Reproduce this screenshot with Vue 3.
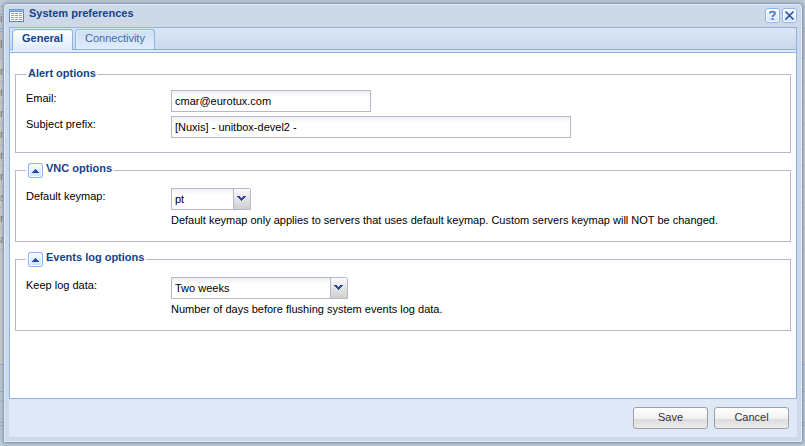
<script setup>
import { ref } from 'vue'

const email = ref('cmar@eurotux.com')
const prefix = ref('[Nuxis] - unitbox-devel2 -')
const keymap = ref('pt')
const logDays = ref('Two weeks')
const tab = ref('General')
const tabs = ['General', 'Connectivity']
const openVnc = ref(true)
const openLog = ref(true)
const rows = ['r', 'm', 'm', 'm', 'm', 'ro', 's', 'm', 'ai']
</script>

<template>
  <div class="page">
    <div class="backdrop" aria-hidden="true">
      <div class="back-top"></div>
      <div class="back-menu">i</div>
      <div class="back-gap"></div>
      <div class="back-head">l</div>
      <div class="back-list">
        <div v-for="(r, i) in rows" :key="i" class="back-row">{{ r }}</div>
      </div>
      <div class="back-foot"></div>
      <div class="back-split"></div>
      <div class="back-menu"></div>
      <div class="back-gap"></div>
      <div class="back-status"></div>
    </div>

    <form class="window" role="dialog" aria-labelledby="title" @submit.prevent>
      <header class="head">
        <svg class="win-icon" width="15" height="13" viewBox="0 0 15 13" shape-rendering="crispEdges" aria-hidden="true">
          <rect x="0" y="0" width="15" height="13" fill="#5b83c4" />
          <rect x="0" y="0" width="15" height="3" fill="#6f9be0" />
          <rect x="1" y="1" width="13" height="1" fill="#8fb4ee" />
          <rect x="1" y="3" width="13" height="9" fill="#fff" />
          <path d="M2 4.5H5M6 4.5H9M10 4.5H13M2 6.5H5M6 6.5H9M10 6.5H13M2 8.5H5M6 8.5H9M10 8.5H13M2 10.5H5M6 10.5H9M10 10.5H13" stroke="#9c9c9c" stroke-width="1" />
        </svg>
        <h1 id="title">System preferences</h1>
        <button type="button" class="tool" aria-label="Help">
          <svg width="15" height="15" viewBox="0 0 15 15" aria-hidden="true">
            <path d="M5 5.6V5Q5 3.6 7.5 3.6T10 5.2Q10 6.4 8.6 7.2Q7.6 7.8 7.6 9" fill="none" stroke="#4a7db5" stroke-width="1.8" />
            <rect x="6.6" y="10" width="2" height="2" fill="#4a7db5" />
          </svg>
        </button>
        <button type="button" class="tool" aria-label="Close">
          <svg width="15" height="15" viewBox="0 0 15 15" aria-hidden="true">
            <path d="M4 4L11 11M11 4L4 11" stroke="#2b4a94" stroke-width="1.5" stroke-linecap="square" />
          </svg>
        </button>
      </header>

      <div class="panel">
        <nav class="tabs" role="tablist">
          <button v-for="t in tabs" :key="t" type="button" role="tab" class="tab"
            :class="{ active: tab === t }" :aria-selected="tab === t" @click="tab = t">{{ t }}</button>
        </nav>
        <div class="spacer"></div>

        <main class="body">
          <fieldset>
            <legend>Alert options</legend>
            <div class="field">
              <label for="email">Email:</label>
              <input id="email" v-model="email" class="text short" type="text">
            </div>
            <div class="field">
              <label for="prefix">Subject prefix:</label>
              <input id="prefix" v-model="prefix" class="text long" type="text">
            </div>
          </fieldset>

          <fieldset class="collapsible">
            <legend>
              <button type="button" class="tool" aria-label="Toggle VNC options" @click="openVnc = !openVnc">
                <svg width="15" height="15" viewBox="0 0 15 15" shape-rendering="crispEdges" aria-hidden="true">
                  <path d="M7 6h1v1h1v1h1v1h1v1H4V9h1V8h1V7h1z" fill="#2b4a94" />
                </svg>
              </button>
              <span>VNC options</span>
            </legend>
            <div v-show="openVnc" class="field">
              <label for="keymap">Default keymap:</label>
              <div class="combo narrow">
                <select id="keymap" v-model="keymap">
                  <option>pt</option>
                  <option>en-us</option>
                </select>
                <span class="trigger"><svg width="16" height="20" viewBox="0 0 16 20" shape-rendering="crispEdges" aria-hidden="true"><path d="M3 7h3v1h1v1h1v-1h1v-1h3v1h-1v1h-1v1h-1v1h-1v1h-1v-1h-1v-1h-1v-1h-1v-1h-1z" fill="#2b4a94" /></svg></span>
              </div>
              <p>Default keymap only applies to servers that uses default keymap. Custom servers keymap will NOT be changed.</p>
            </div>
          </fieldset>

          <fieldset class="collapsible">
            <legend>
              <button type="button" class="tool" aria-label="Toggle events log options" @click="openLog = !openLog">
                <svg width="15" height="15" viewBox="0 0 15 15" shape-rendering="crispEdges" aria-hidden="true">
                  <path d="M7 6h1v1h1v1h1v1h1v1H4V9h1V8h1V7h1z" fill="#2b4a94" />
                </svg>
              </button>
              <span>Events log options</span>
            </legend>
            <div v-show="openLog" class="field">
              <label for="days">Keep log data:</label>
              <div class="combo wide">
                <select id="days" v-model="logDays">
                  <option>Two weeks</option>
                  <option>One month</option>
                </select>
                <span class="trigger"><svg width="16" height="20" viewBox="0 0 16 20" shape-rendering="crispEdges" aria-hidden="true"><path d="M3 7h3v1h1v1h1v-1h1v-1h3v1h-1v1h-1v1h-1v1h-1v1h-1v-1h-1v-1h-1v-1h-1v-1h-1z" fill="#2b4a94" /></svg></span>
              </div>
              <p>Number of days before flushing system events log data.</p>
            </div>
          </fieldset>
        </main>
      </div>

      <footer class="foot">
        <button type="submit" class="btn">Save</button>
        <button type="button" class="btn">Cancel</button>
      </footer>
    </form>
  </div>
</template>

<style>
body {
  margin: 0;
}
</style>

<style scoped>
* {
  box-sizing: border-box;
}

.page {
  position: relative;
  min-height: 100vh;
  padding: 3px 2px 3px 3px;
  display: flex;
  font: 11px/14px "Liberation Sans", Arial, sans-serif;
  color: #000;
  overflow: hidden;
  background: #c0c8d4;
}

/* The application page behind the dialog */
.backdrop {
  position: absolute;
  inset: 0;
  display: flex;
  flex-direction: column;
  color: #707070;
  background: #bfcbda;
}

.back-top {
  height: 6px;
}

.back-menu {
  height: 22px;
  border-top: 1px solid #a4b9d2;
  line-height: 22px;
}

.back-gap {
  height: 3px;
  border-top: 1px solid #93abc9;
}

.back-head {
  height: 28px;
  border-top: 1px solid #93abc9;
  border-bottom: 1px solid #a4b9d2;
  background: #c0c4ca;
  line-height: 24px;
}

.back-list {
  flex: 1;
  padding-top: 2px;
  background: #cecece;
}

.back-row {
  height: 21px;
  border-bottom: 1px solid #bdbdbd;
  line-height: 20px;
}

.back-foot {
  height: 27px;
  border-top: 1px solid #93abc9;
}

.back-split {
  height: 9px;
  border-top: 1px solid #93abc9;
}

.back-status {
  height: 21px;
  border-top: 1px solid #93abc9;
}

.window {
  position: relative;
  flex: 1;
  min-width: 0;
  display: flex;
  flex-direction: column;
  padding: 0 5px 5px;
  border: 1px solid #84a0c4;
  border-radius: 4px 4px 0 0;
  background: #cdd9e8;
  box-shadow: inset 0 0 0 1px #e4ebf3, 0 0 4px #8a9099;
}

.head {
  display: flex;
  align-items: center;
  gap: 2px;
  height: 23px;
}

.win-icon {
  margin-right: 3px;
}

h1 {
  flex: 1;
  margin: 0;
  padding-bottom: 5px;
  font-size: 11px;
  line-height: 14px;
  color: #15428b;
}

.tool {
  display: block;
  flex: none;
  width: 15px;
  height: 15px;
  padding: 0;
  border: 0;
  border-radius: 3px;
  background: linear-gradient(#fff, #c6e0fb);
  box-shadow: inset 0 0 0 1px #8ab4ea, inset 0 0 0 2px #fff;
}

.tool svg {
  display: block;
}

.panel {
  flex: 1;
  display: flex;
  flex-direction: column;
  border: 1px solid #8db2e3;
  background: #fff;
}

.tabs {
  display: flex;
  gap: 2px;
  height: 22px;
  padding: 1px 2px 0;
  border-bottom: 1px solid #8db2e3;
  background: linear-gradient(#dce6f5, #cad9ef);
}

.tab {
  height: 20px;
  padding: 0 9px 3px;
  border: 1px solid #8db2e3;
  border-bottom: 0;
  border-radius: 3px 3px 0 0;
  background: linear-gradient(#cfdff4, #deecfd);
  box-shadow: inset 1px 1px 0 #e6f0fc;
  font: 11px/14px "Liberation Sans", Arial, sans-serif;
  color: #416aa3;
}

.tab.active {
  height: 21px;
  padding-bottom: 4px;
  font-weight: bold;
  color: #15428b;
  background: linear-gradient(#fff, #deecfd);
}

.spacer {
  height: 3px;
  border-bottom: 1px solid #8db2e3;
  background: #deecfd;
}

.body {
  flex: 1;
  display: flex;
  flex-direction: column;
  gap: 9px;
  padding: 13px 5px 20px;
}

fieldset {
  min-width: 0;
  margin: 0;
  padding: 8px 10px 10px;
  border: 1px solid #b5b8c8;
}

legend {
  padding: 0 2px 2px;
  font-weight: bold;
  color: #15428b;
}

.collapsible {
  padding-top: 9px;
}

.collapsible legend {
  display: flex;
  align-items: flex-end;
  gap: 3px;
  height: 17px;
  padding-bottom: 1px;
}

.collapsible legend span {
  padding-bottom: 3px;
}

.field {
  display: grid;
  grid-template-columns: 145px 1fr;
  margin-bottom: 4px;
}

label {
  padding-top: 1px;
}

.text {
  height: 22px;
  padding: 0 3px;
  border: 1px solid #b5b8c8;
  background: linear-gradient(#eef0f0, #fff 6px);
  font: inherit;
  color: #000;
}

.short {
  width: 200px;
}

.long {
  width: 400px;
}

.combo {
  display: grid;
  grid-template-columns: 1fr 17px;
  height: 22px;
  border: 1px solid #b5b8c8;
  border-radius: 0 2px 0 0;
}

.narrow {
  width: 80px;
}

.wide {
  width: 177px;
}

.combo select {
  grid-area: 1 / 1 / 2 / 3;
  appearance: none;
  width: 100%;
  padding: 0 20px 0 3px;
  border: 0;
  border-radius: 0;
  background: linear-gradient(#eef0f0, #fff 6px);
  font: inherit;
  color: #000;
}

.trigger {
  grid-area: 1 / 2 / 2 / 3;
  border-left: 1px solid #b5b8c8;
  background: linear-gradient(#fafafa, #e4e4e4 50%, #cfcfcf);
  pointer-events: none;
}

.trigger svg {
  display: block;
}

p {
  grid-column: 2;
  margin: 3px 0 0;
}

.foot {
  display: flex;
  justify-content: flex-end;
  gap: 6px;
  height: 38px;
  padding: 8px 8px 0 0;
  background: #dfe8f6;
}

.btn {
  width: 75px;
  height: 22px;
  padding: 0 0 2px;
  border: 1px solid #a0a0a0;
  border-radius: 3px;
  background: linear-gradient(#fff, #f0f0f0 55%, #dcdcdc 56%, #ececec);
  font: 11px/14px "Liberation Sans", Arial, sans-serif;
  color: #333;
}
</style>
